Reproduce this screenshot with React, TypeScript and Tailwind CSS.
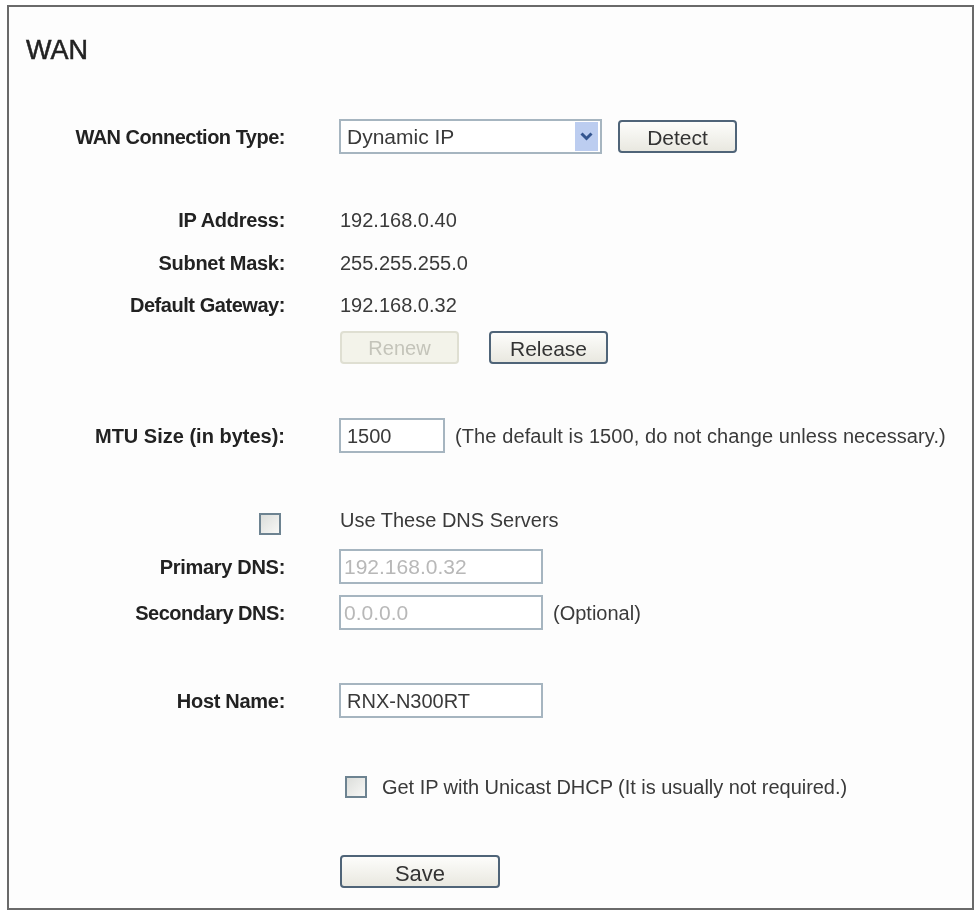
const font = "font-['Liberation_Sans',Arial,sans-serif]";

function Label({ children, track = "tracking-[-0.3px]" }: { children?: React.ReactNode; track?: string }) {
  return (
    <div className={`w-[276px] shrink-0 text-right text-[20px] font-bold text-[#222] ${track}`}>
      {children}
    </div>
  );
}

function Btn({ children, w, disabled, text = "pb-[2px] text-[21px]" }: { children: React.ReactNode; w: string; disabled?: boolean; text?: string }) {
  return (
    <button
      className={
        disabled
          ? `${w} h-[33px] rounded-[4px] border-2 border-[#dfdfd2] bg-[#f3f3ea] pb-[2px] text-[20px] text-[#c4c4ba]`
          : `${w} h-[33px] rounded-[4px] border-2 border-[#4f6478] bg-gradient-to-b from-[#fdfdfb] to-[#e9e8e0] text-[#333] ${text}`
      }
    >
      {children}
    </button>
  );
}

function Field({ value, w, cls }: { value: string; w: string; cls: string }) {
  return (
    <div className={`${w} flex h-[35px] items-center border-2 border-[#a6b5c0] bg-white ${cls}`}>
      {value}
    </div>
  );
}

function Box() {
  return <div className="h-[22px] w-[22px] border-2 border-[#6d8391] bg-gradient-to-br from-[#dcdedb] to-[#f8f8f6]" />;
}

export default function App() {
  return (
    <div className={`${font} h-[912px] w-[976px] overflow-hidden bg-white pl-[7px] pt-[5px]`}>
      <div className="h-[905px] w-[967px] border-2 border-[#6a6a6a] bg-[#fdfdfd] text-[#3a3a3a] blur-[0.4px]">
        <div className="pl-[17px] pt-[29px] text-[27px] leading-[28px] text-[#222] [-webkit-text-stroke:0.5px_#222]">
          WAN
        </div>

        <div className="mt-[55px] flex h-[35px] items-center">
          <Label track="tracking-[-0.5px]">WAN Connection Type:</Label>
          <div className="ml-[54px] flex items-center">
            <div className="flex h-[35px] w-[263px] items-center border-2 border-[#a6b5c0] bg-white pl-[6px] pr-[2px] text-[21px]">
              <span className="flex-1">Dynamic IP</span>
              <span className="flex h-[29px] w-[23px] items-center justify-center bg-[#bccdf0]">
                <svg width="13" height="9" viewBox="0 0 13 9">
                  <path d="M1.5 1.5 6.5 6.5 11.5 1.5" fill="none" stroke="#34558f" strokeWidth="3" />
                </svg>
              </span>
            </div>
            <div className="ml-[16px]">
              <Btn w="w-[119px]" text="pb-[4px] text-[21px]">Detect</Btn>
            </div>
          </div>
        </div>

        <div className="mt-[51px] flex h-[30px] items-center">
          <Label>IP Address:</Label>
          <div className="ml-[55px] text-[20px]">192.168.0.40</div>
        </div>
        <div className="mt-[13px] flex h-[30px] items-center">
          <Label>Subnet Mask:</Label>
          <div className="ml-[55px] text-[20px]">255.255.255.0</div>
        </div>
        <div className="mt-[12px] flex h-[30px] items-center">
          <Label track="tracking-[-0.45px]">Default Gateway:</Label>
          <div className="ml-[55px] text-[20px]">192.168.0.32</div>
        </div>

        <div className="mt-[11px] flex items-center">
          <div className="w-[276px] shrink-0" />
          <div className="ml-[55px] flex gap-[30px]">
            <Btn w="w-[119px]" disabled>Renew</Btn>
            <Btn w="w-[119px]">Release</Btn>
          </div>
        </div>

        <div className="mt-[54px] flex items-center">
          <Label track="tracking-[0px]">MTU Size (in bytes):</Label>
          <div className="ml-[54px] flex items-center">
            <Field value="1500" w="w-[106px]" cls="pl-[6px] text-[20px]" />
            <span className="ml-[10px] text-[20px] tracking-[0.1px]">(The default is 1500, do not change unless necessary.)</span>
          </div>
        </div>

        <div className="mt-[52px] flex h-[30px] items-center">
          <div className="flex w-[276px] shrink-0 justify-end pr-[4px] pt-[7px]">
            <Box />
          </div>
          <div className="ml-[55px] text-[20px]">Use These DNS Servers</div>
        </div>

        <div className="mt-[14px] flex items-center">
          <Label>Primary DNS:</Label>
          <div className="ml-[54px]">
            <Field value="192.168.0.32" w="w-[204px]" cls="pl-[3px] text-[21px] text-[#b8b8b8]" />
          </div>
        </div>
        <div className="mt-[11px] flex items-center">
          <Label track="tracking-[-0.5px]">Secondary DNS:</Label>
          <div className="ml-[54px] flex items-center">
            <Field value="0.0.0.0" w="w-[204px]" cls="pl-[3px] text-[21px] text-[#b8b8b8]" />
            <span className="ml-[10px] text-[20px]">(Optional)</span>
          </div>
        </div>

        <div className="mt-[53px] flex items-center">
          <Label>Host Name:</Label>
          <div className="ml-[54px]">
            <Field value="RNX-N300RT" w="w-[204px]" cls="pl-[6px] text-[20px]" />
          </div>
        </div>

        <div className="mt-[54px] flex h-[30px] items-center">
          <div className="w-[276px] shrink-0" />
          <div className="ml-[60px] flex items-center">
            <Box />
            <span className="ml-[15px] text-[20px] tracking-[-0.04px]">Get IP with Unicast DHCP (It is usually not required.)</span>
          </div>
        </div>

        <div className="mt-[53px] flex">
          <div className="w-[276px] shrink-0" />
          <div className="ml-[55px]">
            <Btn w="w-[160px]" text="pb-[5px] text-[22px]">Save</Btn>
          </div>
        </div>
      </div>
    </div>
  );
}
